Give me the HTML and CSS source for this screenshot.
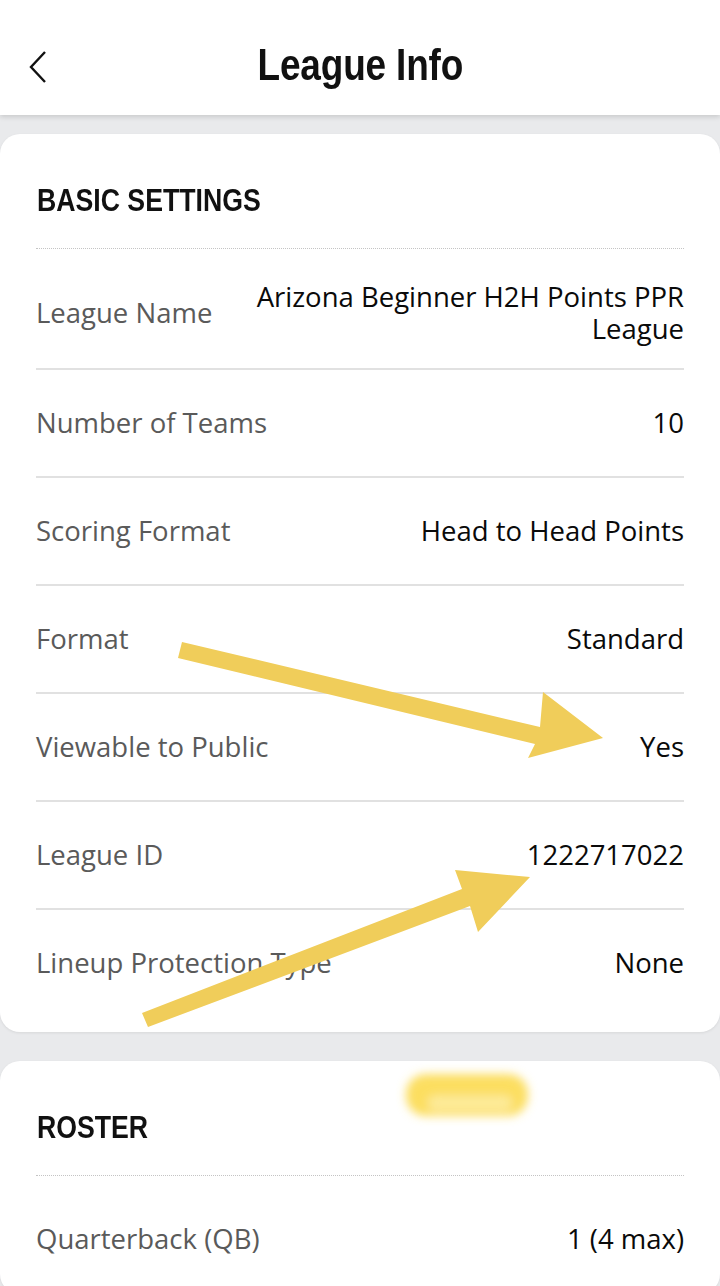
FILE: index.html
```html
<!DOCTYPE html>
<html>
<head>
<meta charset="utf-8">
<link rel="stylesheet" href="styles.css">
</head>
<body>
<div class="page">
  <header class="topbar">
    <svg class="back" width="20" height="34" viewBox="0 0 20 34"><path d="M17 2 L3 17 L17 32" fill="none" stroke="#111" stroke-width="2.4"/></svg>
    <h1 class="title">League Info</h1>
  </header>
  <main class="content">
    <section class="card card-basic">
      <h2 class="card-heading"><span class="narrow">BASIC SETTINGS</span></h2>
      <div class="row row-first row-multi">
        <span class="label">League Name</span>
        <span class="value value-wrap">Arizona Beginner H2H Points PPR League</span>
      </div>
      <div class="row"><span class="label">Number of Teams</span><span class="value">10</span></div>
      <div class="row"><span class="label">Scoring Format</span><span class="value">Head to Head Points</span></div>
      <div class="row"><span class="label">Format</span><span class="value">Standard</span></div>
      <div class="row"><span class="label">Viewable to Public</span><span class="value">Yes</span></div>
      <div class="row"><span class="label">League ID</span><span class="value">1222717022</span></div>
      <div class="row row-last"><span class="label">Lineup Protection Type</span><span class="value">None</span></div>
    </section>
    <section class="card card-roster">
      <h2 class="card-heading"><span class="narrow">ROSTER</span></h2>
      <div class="row row-first"><span class="label">Quarterback (QB)</span><span class="value">1 (4 max)</span></div>
    </section>
  </main>
  <svg class="annot" width="720" height="1286" viewBox="0 0 720 1286">
    <defs>
      <filter id="blur" x="-30%" y="-60%" width="160%" height="220%"><feGaussianBlur stdDeviation="5"/></filter>
    </defs>
    <g fill="#f0cd5a">
      <polygon points="182,642 540,727 543,692 603,738 528,758 535,744 178,658"/>
      <polygon points="142,1013 462,889 455,870 530,877 478,932 470,906 148,1027"/>
    </g>
    <g filter="url(#blur)">
      <rect x="406" y="1074" width="122" height="42" rx="20" fill="#fcda50" opacity="0.9"/>
      <rect x="428" y="1096" width="84" height="14" rx="7" fill="#fdeb9a"/>
    </g>
  </svg>
</div>
</body>
</html>
```
FILE: styles.css
```css
html, body {
  margin: 0;
  padding: 0;
}
body {
  background: #e9eaec;
  font-family: "Open Sans", Roboto, "Liberation Sans", sans-serif;
  width: 720px;
  height: 1286px;
  overflow: hidden;
}
.page {
  position: relative;
  width: 720px;
  height: 1286px;
  overflow: hidden;
}
.topbar {
  position: relative;
  height: 115px;
  background: #fff;
  box-shadow: 0 2px 5px rgba(0,0,0,0.14);
  display: flex;
  align-items: center;
  justify-content: center;
  z-index: 2;
}
.back {
  position: absolute;
  left: 28px;
  top: 50px;
}
.title {
  margin: 0;
  font-family: "Liberation Sans", Arial, sans-serif;
  font-weight: 700;
  font-size: 44px;
  color: #111;
  line-height: 1;
  padding-top: 14px;
  transform: scaleX(0.84);
  letter-spacing: -0.2px;
}
.content {
  padding-top: 19px;
  display: flex;
  flex-direction: column;
  gap: 29px;
}
.card {
  background: #fff;
  border-radius: 20px;
  padding: 0 36px;
  box-shadow: 0 1px 3px rgba(0,0,0,0.08);
}
.card-basic {
  padding-bottom: 16px;
}
.card-heading {
  margin: 0;
  font-family: "Liberation Sans", Arial, sans-serif;
  font-weight: 700;
  font-size: 31px;
  line-height: 36px;
  color: #111;
  padding: 49px 0 29px 1px;
  border-bottom: 1px dotted #c4c4c4;
}
.narrow {
  display: inline-block;
  transform: scaleX(0.86);
  transform-origin: left center;
}
.row {
  display: flex;
  justify-content: space-between;
  align-items: center;
  gap: 40px;
  padding: 37px 0 37px;
  border-bottom: 2px solid #e1e1e1;
  font-size: 27.5px;
  line-height: 32px;
}
.row-first {
  padding-top: 47px;
}
.row-multi {
  padding-top: 32px;
  padding-bottom: 23px;
}
.row-last {
  border-bottom: none;
}
.label {
  color: #5a5a5a;
  white-space: nowrap;
  flex-shrink: 0;
}
.value {
  color: #0a0a0a;
  font-weight: 500;
  text-align: right;
}
.value-wrap {
  max-width: 450px;
}
.annot {
  position: absolute;
  left: 0;
  top: 0;
  pointer-events: none;
  z-index: 3;
}
```
